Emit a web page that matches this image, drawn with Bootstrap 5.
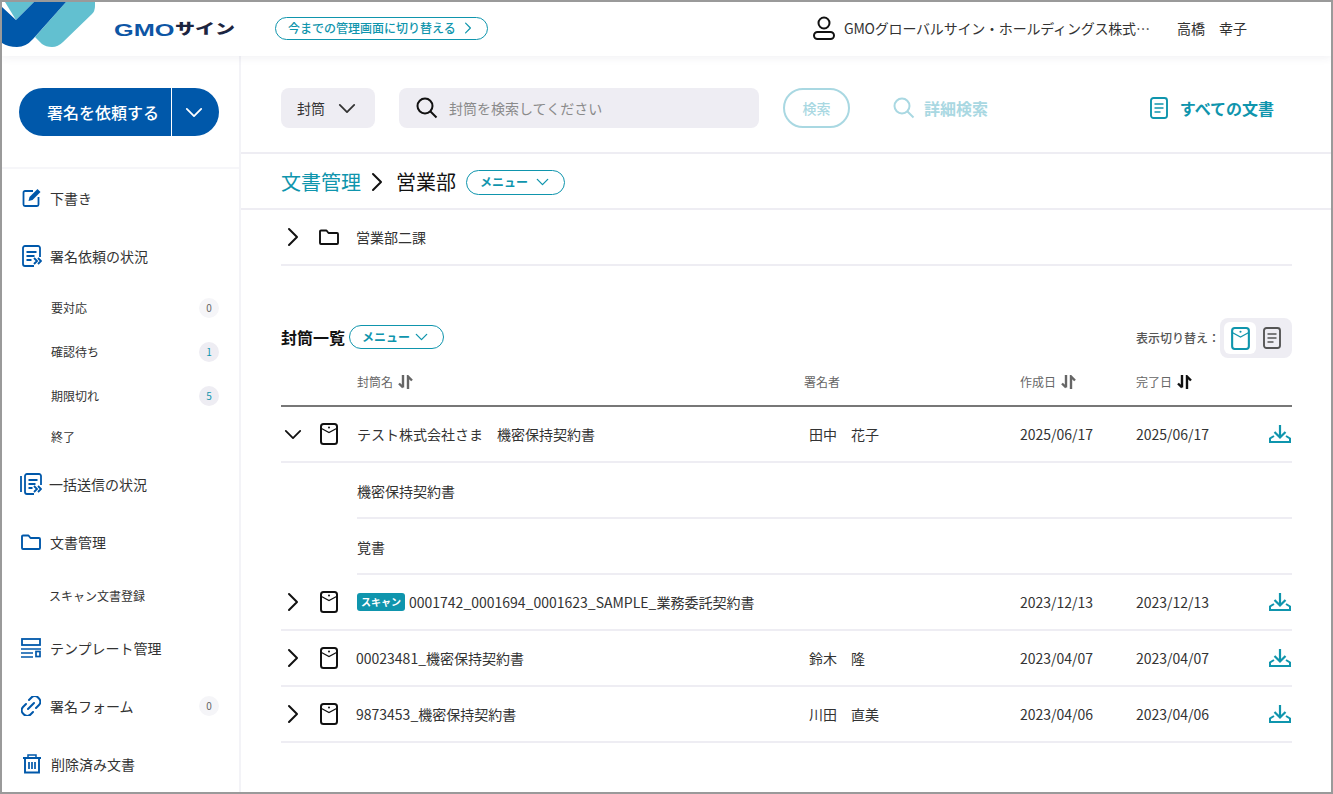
<!DOCTYPE html>
<html lang="ja">
<head>
<meta charset="utf-8">
<title>GMOサイン</title>
<link href="https://cdn.jsdelivr.net/npm/bootstrap@5.3.0/dist/css/bootstrap.min.css" rel="stylesheet">
<style>
:root{--blu:#0058aa;--tea:#0f95ad;--lin:#eeedf3;--dis:#a9d8e2;--txt:#333;}
html,body{height:100%;}
body{margin:0;overflow:hidden;background:#fff;color:var(--txt);font-family:"Noto Sans CJK JP","Noto Sans",sans-serif;font-size:14px;}
svg{flex:none;display:block;}
.frame{width:1333px;height:794px;border:2px solid #9a9a9a;overflow:hidden;display:flex;flex-direction:column;}
.top{height:54px;flex:none;padding-bottom:2px;box-shadow:0 2px 8px rgba(60,60,100,.07);position:relative;z-index:2;background:#fff;}
.logo-txt{width:122px;margin-left:18px;height:20px;font-weight:900;line-height:20px;white-space:nowrap;}
.lg-a,.lg-b{display:inline-block;transform-origin:left center;}
.lg-a{font-family:"Liberation Sans",sans-serif;color:#0d56a5;font-size:16px;width:61px;transform:scale(1.58,1);}
.lg-b{color:#1c2540;font-size:20px;transform:scale(1,.72);}
.pill-out{border:1px solid var(--tea);color:var(--tea);border-radius:20px;background:#fff;font-size:12px;font-weight:500;line-height:1;white-space:nowrap;}
.pill-sw{width:213px;height:23px;margin-left:39px;padding:0 0 0 12px;}
.pill-me{height:25px;width:99px;padding:0 0 0 13px;gap:8px;font-weight:700;}
.pill-nar{width:95px;height:24px;margin-bottom:2px;padding-left:12px;gap:5px;}
.who{width:316px;margin:0 17px 0 9px;letter-spacing:-.2px;}
.side{width:239px;flex:none;border-right:2px solid #f3f3f7;height:100%;overflow:hidden;}
.req-wrap{height:113px;padding:32px 20px 0 17px;border-bottom:2px solid #f6f6f9;}
.req{height:48px;width:200px;background:var(--blu);border-radius:24px;color:#fff;font-size:16px;font-weight:500;}
.req-a{width:153px;text-align:center;padding-left:16px;border-right:1px solid #fff;height:100%;line-height:48px;}
.req-b{flex:1;padding-right:3px;}
.nav-m{height:58px;padding-left:20px;gap:8px;color:var(--txt);}
.nav-a{padding-left:18px;gap:7px;}
.nav-f{padding-left:19px;gap:9px;}
.nav-t{padding-left:21px;gap:10px;}
.sub-i{height:44px;padding:2px 20px 0 49px;font-size:12px;}
.sub-s{height:38px;}
.sub-d{height:48px;padding-left:47px;}
.cnt{width:20px;height:20px;border-radius:50%;font-size:10px;line-height:20px;text-align:center;background:#f5f5f8;color:#666;}
.cnt-on{background:var(--lin);color:var(--tea);}
.ml-b{margin-left:auto;margin-right:20px;}
.main{flex:1;min-width:0;}
.bar{height:98px;padding:32px 39px 24px 40px;border-bottom:2px solid var(--lin);}
.grayb{background:var(--lin);border-radius:8px;height:40px;}
.sel{width:94px;padding-left:16px;gap:13px;color:#333;}
.srch{width:360px;margin-left:24px;padding-left:17px;gap:11px;color:#8a8a8a;}
.btn-s{width:67px;height:40px;margin-left:24px;border:2px solid var(--dis);border-radius:20px;color:var(--dis);font-size:14px;font-weight:500;text-align:center;line-height:36px;}
.det{margin-left:43px;gap:9px;color:var(--dis);font-size:16px;font-weight:700;}
.alld{margin-left:auto;margin-right:18px;gap:12px;color:var(--tea);font-size:16px;font-weight:700;}
.crumb{height:56px;padding:2px 0 0 40px;border-bottom:2px solid var(--lin);font-size:20px;}
.crumb-l{color:var(--tea);}
.fold{height:56px;margin:0 39px 0 40px;border-bottom:2px solid var(--lin);}
.lst{padding:0 39px 0 40px;}
.lst-h{height:52px;margin-top:46px;}
.lst-t{font-size:16px;font-weight:700;color:#111;margin:0 4px 2px 0;}
.lab{margin-left:auto;font-size:12px;color:#555;font-weight:500;}
.tog{width:72px;height:40px;border-radius:8px;background:var(--lin);padding:4px;}
.tog-a{width:32px;height:32px;border-radius:6px;background:#fff;color:var(--tea);}
.tog-b{width:32px;height:32px;color:#555;}
.rw{display:grid;grid-template-columns:76px 447px 216px 116px 116px 40px;align-items:center;height:56px;}
.rw-hd{height:43px;padding-bottom:5px;border-bottom:2px solid #777;font-size:12px;color:#666;}
.hd-c{gap:5px;}
.sort-on{color:#111;}
.rw-b{border-bottom:2px solid var(--lin);}
.ctl{align-items:center;gap:15px;color:#111;}
.chv{width:24px;}
.sg{padding-left:5px;}
.dl{justify-self:end;color:var(--tea);margin-right:1px;}
.ins{margin-left:76px;height:56px;padding-top:2px;border-bottom:2px solid var(--lin);}
.scan{background:var(--tea);color:#fff;border-radius:3px;font-size:10px;font-weight:700;height:18px;line-height:18px;padding:0 4px;margin-right:4px;}
.nudge{margin-left:-1px;}
</style>
</head>
<body>
<svg width="0" height="0" style="position:absolute">
<defs>
<symbol id="ch-r" viewBox="0 0 16 20"><path d="M4 2l8 8-8 8" fill="none" stroke="currentColor" stroke-width="2" stroke-linecap="round" stroke-linejoin="round"/></symbol>
<symbol id="ch-d" viewBox="0 0 20 12"><path d="M2 2l8 8 8-8" fill="none" stroke="currentColor" stroke-width="2" stroke-linecap="round" stroke-linejoin="round"/></symbol>
<symbol id="env" viewBox="0 0 18 22"><rect x="1" y="1" width="16" height="20" rx="2.500" fill="none" stroke="currentColor" stroke-width="2"/><path d="M1.500 5.500L9 9.500l7.500-4" fill="none" stroke="currentColor" stroke-width="1.200"/><circle cx="9" cy="4.500" r="1" fill="currentColor"/></symbol>
<symbol id="fold" viewBox="0 0 20 16"><path d="M1 14V2.500a1 1 0 0 1 1-1h5.500l2 2.500H18a1 1 0 0 1 1 1V14a1 1 0 0 1-1 1H2a1 1 0 0 1-1-1z" fill="none" stroke="currentColor" stroke-width="1.900" stroke-linejoin="round"/></symbol>
<symbol id="srt" viewBox="0 0 15 14"><path d="M5 0v12.500M1 8.500L5 12.500M10 14V1.500l4 4" fill="none" stroke="currentColor" stroke-width="2.400"/></symbol>
<symbol id="dl" viewBox="0 0 22 18"><path d="M11 0v12M5.500 7l5.500 5.500L16.500 7" fill="none" stroke="currentColor" stroke-width="2.200"/><path d="M5 11L1 13.500V17h20v-3.500L17 11" fill="none" stroke="currentColor" stroke-width="2"/></symbol>
<symbol id="doc" viewBox="0 0 18 22"><rect x="1" y="1" width="16" height="20" rx="2.500" fill="none" stroke="currentColor" stroke-width="1.900"/><path d="M4.500 7h9M4.500 11h9M4.500 15h6" stroke="currentColor" stroke-width="1.700"/></symbol>
<symbol id="mag" viewBox="0 0 22 22"><circle cx="9" cy="9" r="7.500" fill="none" stroke="currentColor" stroke-width="2"/><path d="M14.500 14.500l6 6" stroke="currentColor" stroke-width="2"/></symbol>
</defs>
</svg>
<div class="frame">
  <header class="top d-flex align-items-center">
    <svg width="94" height="45" viewBox="0 0 94 45" class="align-self-start"><path d="M3 0H32L14 18Z" fill="#62c0d0"/><path d="M64 0H93V4Q93 9 90 12L61 40Q56 45 50 45Q44 45 40 42L33 35Z" fill="#62c0d0"/><path d="M0 5L14 18 32 0H64L31 37Q24 45 15 45Q6 45 0 41Z" fill="#0058aa"/></svg>
    <div class="logo-txt"><span class="lg-a">GMO</span><span class="lg-b">サイン</span></div>
    <a class="pill-out pill-sw d-inline-flex align-items-center text-decoration-none">今までの管理画面に切り替える<svg width="10" height="12" style="margin-left:7px"><use href="#ch-r"/></svg></a>
    <svg width="22" height="24" viewBox="0 0 22 24" style="margin-left:325px;color:#111"><circle cx="11" cy="7" r="5.500" fill="none" stroke="currentColor" stroke-width="2"/><rect x="1" y="16" width="20" height="7" rx="3.500" fill="none" stroke="currentColor" stroke-width="2"/></svg>
    <div class="who text-truncate">GMOグローバルサイン・ホールディングス株式会社</div>
    <div>高橋　幸子</div>
  </header>
  <div class="d-flex flex-grow-1" style="min-height:0">
    <aside class="side">
      <div class="req-wrap"><div class="req d-flex align-items-center"><div class="req-a">署名を依頼する</div><div class="req-b d-flex justify-content-center"><svg width="18" height="11" style="color:#fff"><use href="#ch-d"/></svg></div></div></div>
      <div class="nav-m d-flex align-items-center"><svg width="20" height="20" viewBox="0 0 20 20" style="color:var(--blu)"><path d="M11 3H3a1.500 1.500 0 0 0-1.500 1.500v12A1.500 1.500 0 0 0 3 18h12a1.500 1.500 0 0 0 1.500-1.500V9" fill="none" stroke="currentColor" stroke-width="1.800"/><path d="M6.500 13l1-4L15.500 1l3 3-8 8z" fill="currentColor"/></svg><span>下書き</span></div>
      <div class="nav-m d-flex align-items-center"><svg width="20" height="22" viewBox="0 0 20 22" style="color:var(--blu)"><path d="M18 12V3a2 2 0 0 0-2-2H3a2 2 0 0 0-2 2v16a2 2 0 0 0 2 2h9" fill="none" stroke="currentColor" stroke-width="1.800"/><path d="M4.500 7h10M4.500 11h8M4.500 15h5M12 13l3 3-3 3M16 13l3 3-3 3" fill="none" stroke="currentColor" stroke-width="1.900"/></svg><span>署名依頼の状況</span></div>
      <div class="sub-i d-flex align-items-center"><span>要対応</span><span class="cnt ms-auto">0</span></div>
      <div class="sub-i d-flex align-items-center"><span>確認待ち</span><span class="cnt cnt-on ms-auto">1</span></div>
      <div class="sub-i d-flex align-items-center"><span>期限切れ</span><span class="cnt cnt-on ms-auto">5</span></div>
      <div class="sub-i sub-s d-flex align-items-center"><span>終了</span></div>
      <div class="nav-m nav-a d-flex align-items-center"><svg width="22" height="22" viewBox="0 0 22 22" style="color:var(--blu)"><path d="M1 3v16" stroke="currentColor" stroke-width="1.800"/><path d="M21 12V3a2 2 0 0 0-2-2H7a2 2 0 0 0-2 2v16a2 2 0 0 0 2 2h7" fill="none" stroke="currentColor" stroke-width="1.800"/><path d="M8.500 7h9M8.500 11h7M8.500 15h4M14 13l3 3-3 3M18 13l3 3-3 3" fill="none" stroke="currentColor" stroke-width="1.800"/></svg><span>一括送信の状況</span></div>
      <div class="nav-m nav-f d-flex align-items-center"><svg width="20" height="16" style="color:var(--blu)"><use href="#fold"/></svg><span>文書管理</span></div>
      <div class="sub-i sub-d d-flex align-items-center"><span>スキャン文書登録</span></div>
      <div class="nav-m nav-f d-flex align-items-center"><svg width="20" height="20" viewBox="0 0 20 20" style="color:var(--blu)"><rect x="1" y="1" width="18" height="6" fill="none" stroke="currentColor" stroke-width="1.800"/><path d="M0 11h20M0 15h12M0 19h12" stroke="currentColor" stroke-width="1.700"/><rect x="15" y="13.500" width="4" height="5" fill="none" stroke="currentColor" stroke-width="1.700"/></svg><span>テンプレート管理</span></div>
      <div class="nav-m nav-f d-flex align-items-center"><svg width="20" height="20" viewBox="0 0 20 20" style="color:var(--blu)"><path d="M8 4l2.500-2.500a4.500 4.500 0 0 1 6.500 0l1 1a4.500 4.500 0 0 1 0 6.500L15 12M12 16l-2.500 2.500a4.500 4.500 0 0 1-6.500 0l-1-1a4.500 4.500 0 0 1 0-6.500L5 8M7 13l6-6" fill="none" stroke="currentColor" stroke-width="2" stroke-linecap="round"/></svg><span>署名フォーム</span><span class="cnt ml-b">0</span></div>
      <div class="nav-m nav-t d-flex align-items-center"><svg width="18" height="20" viewBox="0 0 18 20" style="color:var(--blu)"><path d="M0 4h18" stroke="currentColor" stroke-width="2"/><path d="M5 3.500V1h8v2.500" fill="none" stroke="currentColor" stroke-width="1.500"/><path d="M2 5v13.500h14V5" fill="none" stroke="currentColor" stroke-width="1.900"/><path d="M6 8v7M9 8v7M12 8v7" stroke="currentColor" stroke-width="1.700"/></svg><span>削除済み文書</span></div>
    </aside>
    <main class="main">
      <div class="bar d-flex align-items-center">
        <div class="grayb sel d-flex align-items-center"><span>封筒</span><svg width="18" height="11"><use href="#ch-d"/></svg></div>
        <div class="grayb srch d-flex align-items-center"><svg width="22" height="22" style="color:#111"><use href="#mag"/></svg><span>封筒を検索してください</span></div>
        <div class="btn-s">検索</div>
        <div class="det d-flex align-items-center"><svg width="22" height="22"><use href="#mag"/></svg><span>詳細検索</span></div>
        <div class="alld d-flex align-items-center"><svg width="18" height="22"><use href="#doc"/></svg><span>すべての文書</span></div>
      </div>
      <div class="crumb d-flex align-items-center"><span class="crumb-l">文書管理</span><svg width="16" height="20" style="margin:0 11px 0 8px;color:#111"><use href="#ch-r"/></svg><span style="color:#111;margin-right:10px">営業部</span><a class="pill-out pill-me d-inline-flex align-items-center text-decoration-none">メニュー<svg width="13" height="8"><use href="#ch-d"/></svg></a></div>
      <div class="fold d-flex align-items-center"><svg width="16" height="20" style="margin-left:4px;color:#111"><use href="#ch-r"/></svg><svg width="20" height="16" style="margin-left:18px;color:#111"><use href="#fold"/></svg><span style="margin-left:17px">営業部二課</span></div>
      <section class="lst">
        <div class="lst-h d-flex align-items-center"><span class="lst-t">封筒一覧</span><a class="pill-out pill-me pill-nar d-inline-flex align-items-center text-decoration-none">メニュー<svg width="13" height="8"><use href="#ch-d"/></svg></a><span class="lab">表示切り替え：</span><div class="tog d-flex"><div class="tog-a d-flex align-items-center justify-content-center"><svg width="19" height="23"><use href="#env"/></svg></div><div class="tog-b d-flex align-items-center justify-content-center"><svg width="18" height="22"><use href="#doc"/></svg></div></div></div>
        <div class="rw rw-hd"><div></div><div class="d-flex align-items-center hd-c"><span>封筒名</span><svg width="15" height="14"><use href="#srt"/></svg></div><div>署名者</div><div class="d-flex align-items-center hd-c"><span>作成日</span><svg width="15" height="14"><use href="#srt"/></svg></div><div class="d-flex align-items-center hd-c"><span>完了日</span><svg class="sort-on" width="15" height="14"><use href="#srt"/></svg></div><div></div></div>
        <div class="rw rw-b">
          <div class="d-flex ctl"><div class="chv d-flex justify-content-center"><svg width="18" height="11"><use href="#ch-d"/></svg></div><svg width="18" height="22"><use href="#env"/></svg></div><div>テスト株式会社さま　機密保持契約書</div><div class="sg">田中　花子</div><div>2025/06/17</div><div>2025/06/17</div><svg class="dl" width="22" height="18"><use href="#dl"/></svg>
        </div>
        <div class="ins d-flex align-items-center">機密保持契約書</div>
        <div class="ins d-flex align-items-center">覚書</div>
        <div class="rw rw-b"><div class="d-flex ctl"><div class="chv d-flex justify-content-center"><svg width="16" height="20"><use href="#ch-r"/></svg></div><svg width="18" height="22"><use href="#env"/></svg></div><div class="d-flex align-items-center"><span class="scan">スキャン</span><span>0001742_0001694_0001623_SAMPLE_業務委託契約書</span></div><div></div><div>2023/12/13</div><div>2023/12/13</div><svg class="dl" width="22" height="18"><use href="#dl"/></svg></div>
        <div class="rw rw-b"><div class="d-flex ctl"><div class="chv d-flex justify-content-center"><svg width="16" height="20"><use href="#ch-r"/></svg></div><svg width="18" height="22"><use href="#env"/></svg></div><div class="nudge">00023481_機密保持契約書</div><div class="sg">鈴木　隆</div><div>2023/04/07</div><div>2023/04/07</div><svg class="dl" width="22" height="18"><use href="#dl"/></svg></div>
        <div class="rw rw-b"><div class="d-flex ctl"><div class="chv d-flex justify-content-center"><svg width="16" height="20"><use href="#ch-r"/></svg></div><svg width="18" height="22"><use href="#env"/></svg></div><div class="nudge">9873453_機密保持契約書</div><div class="sg">川田　直美</div><div>2023/04/06</div><div>2023/04/06</div><svg class="dl" width="22" height="18"><use href="#dl"/></svg></div>
      </section>
    </main>
  </div>
</div>
</body>
</html>
